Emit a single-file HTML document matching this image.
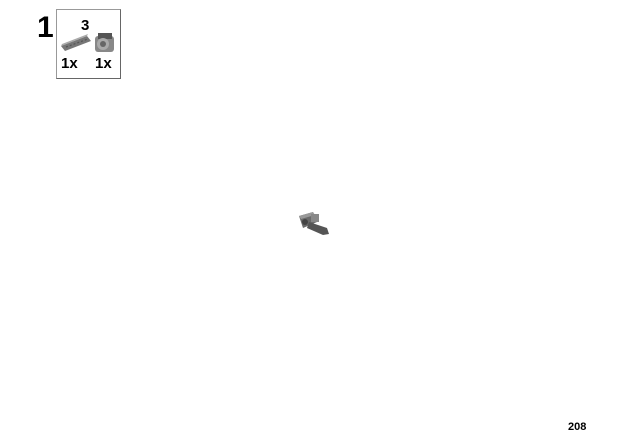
<!DOCTYPE html>
<html><head><meta charset="utf-8"><style>
body{margin:0;width:631px;height:446px;background:#fff;position:relative;overflow:hidden;font-family:"Liberation Sans",sans-serif;}
.t{position:absolute;font-weight:bold;color:#000;}
.box{position:absolute;left:56px;top:9px;width:63px;height:68px;border:1px solid #999;border-right-color:#666;border-bottom-color:#666;}
</style></head><body>
<div class="t" style="left:37px;top:11px;font-size:30px;">1</div>
<div class="box"></div>
<div class="t" style="left:81px;top:17px;font-size:15px;">3</div>
<svg style="position:absolute;left:58px;top:32px" width="60" height="22">
<polygon points="3,14 29,4 33,9 7,19" fill="#777"/>
<polygon points="3,14 29,4 30,2 4,12" fill="#aaa"/>
<path d="M8,15 L30,7" stroke="#555" stroke-width="1.2" stroke-dasharray="2,2"/>
<rect x="37" y="4" width="19" height="16" rx="3" fill="#888"/>
<rect x="40" y="1" width="14" height="6" fill="#555"/>
<circle cx="45" cy="12" r="6" fill="#aaa"/>
<circle cx="45" cy="12" r="3" fill="#666"/>
</svg>
<div class="t" style="left:61px;top:55px;font-size:15px;">1x</div>
<div class="t" style="left:95px;top:55px;font-size:15px;">1x</div>
<svg style="position:absolute;left:295px;top:208px" width="40" height="30">
<polygon points="4,8 18,4 22,14 8,20" fill="#6a6a6a"/>
<polygon points="4,8 18,4 20,7 6,11" fill="#999"/>
<polygon points="14,14 32,20 34,26 28,27 12,20" fill="#555"/>
<rect x="16" y="6" width="8" height="8" fill="#888"/>
<circle cx="10" cy="14" r="3" fill="#444"/>
</svg>
<div class="t" style="left:568px;top:421px;font-size:11px;">208</div>
</body></html>
